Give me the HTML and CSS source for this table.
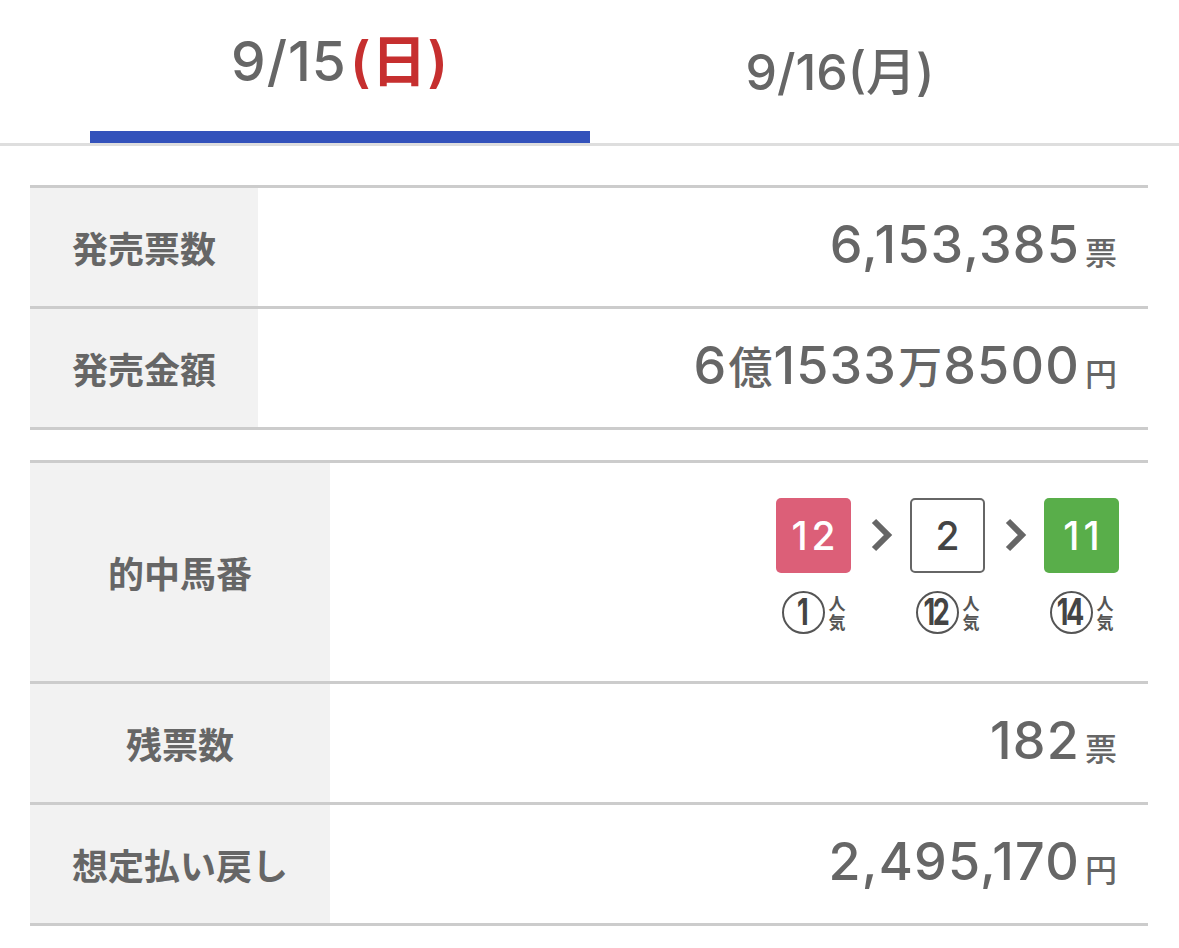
FILE: index.html
```html
<!DOCTYPE html>
<html lang="ja">
<head>
<meta charset="utf-8">
<link rel="stylesheet" href="styles.css">
</head>
<body>
<nav class="tabs">
  <div class="tab tab-active"><span class="tab-text">9/15<span class="sun">(日)</span></span></div>
  <div class="tab"><span class="tab-text tab-text-small">9/16(月)</span></div>
</nav>
<main class="content">
  <section class="table table-narrow">
    <div class="row">
      <div class="label">発売票数</div>
      <div class="value"><span class="num">6,153,385</span><span class="unit">票</span></div>
    </div>
    <div class="row">
      <div class="label">発売金額</div>
      <div class="value"><span class="num">6<span class="kanji">億</span>1533<span class="kanji">万</span>8500</span><span class="unit">円</span></div>
    </div>
  </section>
  <section class="table table-wide">
    <div class="row row-tall">
      <div class="label">的中馬番</div>
      <div class="value value-horses">
        <div class="horses">
          <div class="horse">
            <div class="box box-red">12</div>
            <div class="pop"><span class="circle"><span class="circle-num">1</span></span><span class="ninki"><span>人</span><span>気</span></span></div>
          </div>
          <svg class="chev" viewBox="0 0 22 34" width="22" height="34"><polyline points="3,3 17,17 3,31" fill="none" stroke="#666" stroke-width="6"/></svg>
          <div class="horse">
            <div class="box box-white">2</div>
            <div class="pop"><span class="circle"><span class="circle-num">12</span></span><span class="ninki"><span>人</span><span>気</span></span></div>
          </div>
          <svg class="chev" viewBox="0 0 22 34" width="22" height="34"><polyline points="3,3 17,17 3,31" fill="none" stroke="#666" stroke-width="6"/></svg>
          <div class="horse">
            <div class="box box-green">11</div>
            <div class="pop"><span class="circle"><span class="circle-num">14</span></span><span class="ninki"><span>人</span><span>気</span></span></div>
          </div>
        </div>
      </div>
    </div>
    <div class="row">
      <div class="label">残票数</div>
      <div class="value"><span class="num">182</span><span class="unit">票</span></div>
    </div>
    <div class="row">
      <div class="label">想定払い戻し</div>
      <div class="value"><span class="num">2,495,170</span><span class="unit">円</span></div>
    </div>
  </section>
</main>
</body>
</html>
```

FILE: styles.css
```css
* { box-sizing: border-box; }
html, body { margin: 0; padding: 0; background: #fff; }
body {
  font-family: "Inter", "Noto Sans CJK JP", sans-serif;
  color: #666;
}
.tabs {
  display: flex;
  justify-content: center;
  border-bottom: 3px solid #dedede;
  padding-left: 1px;
}
.tab {
  width: 500px;
  height: 143px;
  display: flex;
  justify-content: center;
  border-bottom: 12px solid transparent;
}
.tab-active { border-bottom-color: #3352bb; }
.tab-text {
  font-size: 55px;
  line-height: 1;
  padding-top: 34px;
  font-weight: 500;
  letter-spacing: 1px;
}
.tab-text-small {
  font-size: 50px;
  padding-top: 47px;
  letter-spacing: 0;
}
.sun { color: #c62f2f; font-weight: 600; margin-left: 3px; }
.content {
  padding: 39px 31px 0 30px;
}
.table { border-top: 3px solid #ccc; }
.table + .table { margin-top: 30px; }
.row {
  display: grid;
  grid-template-columns: 228px 1fr;
  height: 121px;
  border-bottom: 3px solid #ccc;
}
.table-wide .row { grid-template-columns: 300px 1fr; }
.row-tall { height: 221px; }
.label {
  background: #f2f2f2;
  display: flex;
  align-items: center;
  justify-content: center;
  font-family: "Noto Sans CJK JP", sans-serif;
  font-weight: 700;
  font-size: 36px;
  color: #666;
}
.value {
  display: flex;
  align-items: center;
  justify-content: flex-end;
  padding-right: 31px;
  padding-bottom: 6px;
}
.num {
  font-size: 52px;
  font-weight: 500;
  letter-spacing: 1.2px;
}
.kanji {
  font-size: 44px;
  letter-spacing: 0;
  margin: 0 1px;
}
.unit {
  font-family: "Noto Sans CJK JP", sans-serif;
  font-size: 32px;
  font-weight: 500;
  margin-left: 5px;
  padding-top: 14px;
}
.value-horses {
  align-items: flex-start;
  padding-top: 35px;
  padding-right: 29px;
  padding-bottom: 0;
}
.horses {
  display: flex;
  align-items: flex-start;
}
.horse {
  display: flex;
  flex-direction: column;
  align-items: center;
  width: 75px;
}
.chev { flex: none; margin: 20px 17px 0 20px; }
.box {
  width: 75px;
  height: 75px;
  border-radius: 5px;
  display: flex;
  align-items: center;
  justify-content: center;
  font-size: 39px;
  font-weight: 500;
  letter-spacing: 4px;
  padding-left: 4px;
  color: #fff;
}
.box-red { background: #dc5f78; }
.box-green { background: #59ae4a; }
.box-white { background: #fff; border: 2px solid #666; color: #444; }
.pop {
  display: flex;
  align-items: flex-start;
  margin-top: 18px;
  gap: 4px;
  white-space: nowrap;
}
.circle {
  flex: none;
  width: 43px;
  height: 43px;
  border-radius: 50%;
  border: 2px solid #555;
  display: flex;
  align-items: center;
  justify-content: center;
  color: #444;
}
.circle-num {
  display: block;
  font-family: "Inter", sans-serif;
  font-weight: 700;
  font-size: 33px;
  line-height: 1;
  letter-spacing: -3px;
  margin-right: 3px;
  transform: scale(0.82, 1.1);
}
.ninki {
  display: flex;
  flex-direction: column;
  font-family: "Noto Sans CJK JP", sans-serif;
  font-weight: 700;
  font-size: 17px;
  line-height: 19px;
  color: #555;
  padding-top: 2px;
}
.ninki span { display: block; }
```
